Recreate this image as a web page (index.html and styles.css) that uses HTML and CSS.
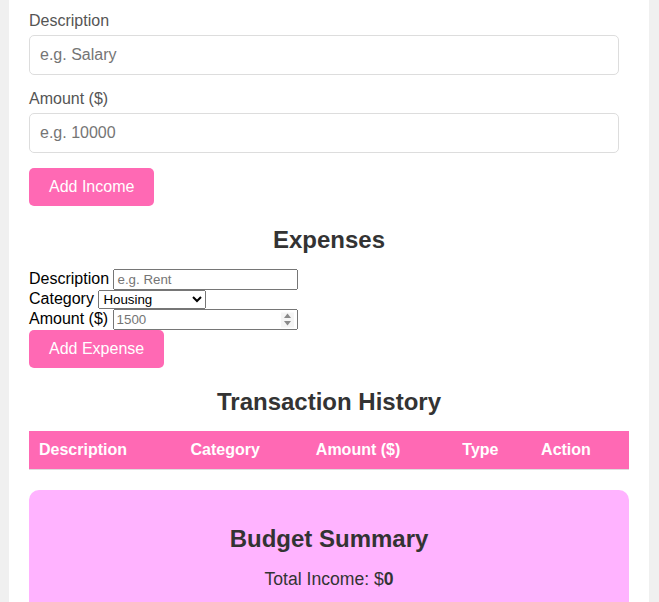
FILE: index.html
```html
<!DOCTYPE html>
<html lang="en">
<head>
<meta charset="utf-8">
<title>Budget Tracker</title>
<link rel="stylesheet" href="styles.css">
</head>
<body>
<div class="container">
  <section class="income">
    <div class="form-group">
      <label class="field-label" for="inc-desc">Description</label>
      <input class="field" id="inc-desc" type="text" placeholder="e.g. Salary">
    </div>
    <div class="form-group">
      <label class="field-label" for="inc-amt">Amount ($)</label>
      <input class="field" id="inc-amt" type="number" placeholder="e.g. 10000">
    </div>
    <button class="btn">Add Income</button>
  </section>

  <section class="expenses">
    <h2 class="title">Expenses</h2>
    <div class="raw-form">
      <label for="exp-desc">Description</label> <input id="exp-desc" type="text" placeholder="e.g. Rent"><br>
      <label for="exp-cat">Category</label> <select id="exp-cat">
        <option>Housing</option>
        <option>Food</option>
        <option>Transportation</option>
        <option>Utilities</option>
        <option>Other</option>
      </select><br>
      <label for="exp-amt">Amount ($)</label> <span class="num-wrap"><input id="exp-amt" type="number" placeholder="1500"><span class="spin" aria-hidden="true"><svg width="9" height="14" viewBox="0 0 9 14"><path d="M4.5 1 L8 5.5 H1 Z" fill="#8a8a8a"/><path d="M1 8.5 H8 L4.5 13 Z" fill="#8a8a8a"/></svg></span></span><br>
      <button class="btn">Add Expense</button>
    </div>
  </section>

  <section class="history">
    <h2 class="title">Transaction History</h2>
    <table class="tx-table">
      <thead>
        <tr>
          <th>Description</th>
          <th>Category</th>
          <th>Amount ($)</th>
          <th>Type</th>
          <th>Action</th>
        </tr>
      </thead>
      <tbody></tbody>
    </table>
  </section>

  <section class="summary">
    <h2 class="title">Budget Summary</h2>
    <p class="summary-line">Total Income: $<span class="val">0</span></p>
    <p class="summary-line">Total Expenses: $<span class="val">0</span></p>
    <p class="summary-line">Balance: $<span class="val">0</span></p>
  </section>
</div>
</body>
</html>
```
FILE: styles.css
```css
html, body {
  margin: 0;
  padding: 0;
}
body {
  background: #f0f0f0;
  font-family: "Liberation Sans", Arial, sans-serif;
  color: #000;
  padding-right: 1px;
}
.container {
  max-width: 600px;
  margin: 0 auto;
  background: #fff;
  padding: 12px 20px 20px;
}
.form-group {
  margin-bottom: 15px;
}
.field-label {
  display: block;
  margin-bottom: 5px;
  color: #555;
  font-size: 16px;
}
.field {
  box-sizing: border-box;
  width: calc(100% - 10px);
  padding: 10px;
  border: 1px solid #ddd;
  border-radius: 5px;
  font-family: "Liberation Sans", Arial, sans-serif;
  font-size: 16px;
  color: #333;
  background: #fff;
}
.field::placeholder {
  color: #757575;
}
.field::-webkit-outer-spin-button,
.field::-webkit-inner-spin-button {
  -webkit-appearance: none;
  margin: 0;
}
.btn {
  background: #ff69b4;
  color: #fff;
  border: none;
  border-radius: 5px;
  padding: 10px 20px;
  font-family: "Liberation Sans", Arial, sans-serif;
  font-size: 16px;
  line-height: 18px;
  cursor: pointer;
}
.title {
  text-align: center;
  color: #333;
  font-size: 24px;
  margin: 20px 0 15px;
}
.raw-form {
  font-size: 16px;
}
.num-wrap {
  position: relative;
  display: inline-block;
}
.spin {
  position: absolute;
  right: 4px;
  top: 50%;
  transform: translateY(-50%);
  width: 13px;
  height: 15px;
  background: #f5f5f5;
  display: flex;
  align-items: center;
  justify-content: center;
  pointer-events: none;
}
.spin svg {
  display: block;
}
.tx-table {
  width: 100%;
  border-collapse: collapse;
  margin-bottom: 20px;
}
.tx-table th {
  background: #ff69b4;
  color: #fff;
  text-align: left;
  padding: 10px;
  border-bottom: 1px solid #ddd;
  font-size: 16px;
}
.summary {
  background: #ffb3ff;
  border-radius: 10px;
  padding: 15px 20px;
  text-align: center;
}
.summary-line {
  color: #333;
  font-size: 17.6px;
  margin: 16px 0;
}
.val {
  font-weight: bold;
}
```
